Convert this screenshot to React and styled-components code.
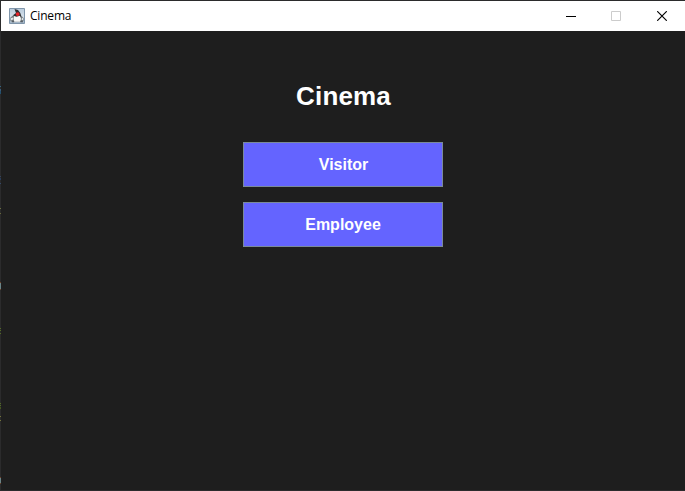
import React from 'react';
import styled, { createGlobalStyle } from 'styled-components';

const GlobalStyle = createGlobalStyle`
  * { box-sizing: border-box; }
  body { margin: 0; background: #1e1e1e; overflow: hidden; }
`;

const Desktop = styled.div`
  display: grid;
  grid-template-columns: 1px 1fr;
  grid-template-rows: 1px 1fr 1px;
  width: 685px;
  height: 491px;
  background: #2b2b2c;
`;

const Edge = styled.div`
  grid-column: 1;
  grid-row: 1 / 4;
  svg { display: block; }
`;

const Window = styled.main`
  grid-column: 2;
  grid-row: 2;
  display: flex;
  flex-direction: column;
  background: #1e1e1e;
`;

const TitleBar = styled.header`
  display: flex;
  align-items: center;
  height: 30px;
  padding-left: 8px;
  background: #fff;
`;

const WindowTitle = styled.span`
  flex: 1;
  margin-left: 5px;
  font: 12px/16px 'Open Sans', 'Noto Sans', sans-serif;
  letter-spacing: -0.2px;
  color: #000;
`;

const ControlButton = styled.button`
  display: flex;
  align-items: center;
  justify-content: center;
  width: ${(p) => p.$width || 45}px;
  height: 30px;
  padding: 0;
  border: 0;
  background: none;
  color: ${(p) => (p.disabled ? '#ccc' : '#000')};
  svg { display: block; }
`;

const Controls = styled.div`
  display: flex;
  width: 137px;
`;

const Content = styled.section`
  display: flex;
  flex-direction: column;
  align-items: center;
  padding-top: 50px;
`;

const Heading = styled.h1`
  margin: 0 0 31px;
  padding-left: 1px;
  font: bold 26px/30px 'Liberation Sans', Arial, sans-serif;
  letter-spacing: 0.15px;
  color: #fff;
`;

const Menu = styled.nav`
  display: flex;
  flex-direction: column;
  gap: 15px;
`;

const MenuButton = styled.button`
  width: 200px;
  height: 45px;
  padding: 0 0 0 ${(p) => p.$inset || 0}px;
  border: 1px solid #7a8a99;
  background: #6464ff;
  color: #fff;
  font: bold 16px/18px 'Liberation Sans', Arial, sans-serif;
`;

const edgeMarks = [
  [86, 1, '#356580'], [89, 2, '#385a78'], [91, 3, '#23506f'],
  [176, 1, '#34445c'], [178, 2, '#293c59'], [183, 1, '#34496a'],
  [208, 1, '#6b7040'], [213, 1, '#68683c'],
  [282, 1, '#70432c'], [283, 6, '#6b8588'], [289, 1, '#70432c'],
  [328, 1, '#536b25'], [330, 1, '#536b25'], [333, 1, '#536b25'],
  [403, 1, '#536b25'], [405, 1, '#536b25'], [407, 2, '#45571f'],
  [416, 1, '#74743b'], [420, 1, '#74743b'],
  [477, 1, '#70432c'], [478, 5, '#6b8588'], [483, 1, '#70432c'],
];

const JavaIcon = () => (
  <svg width="16" height="16" viewBox="0 0 16 16">
    <defs>
      <linearGradient id="tile" x2="0" y2="1">
        <stop stopColor="#b9cbdc" />
        <stop offset=".55" stopColor="#d5e0ea" />
        <stop offset="1" stopColor="#9fb2c3" />
      </linearGradient>
    </defs>
    <path d="M.5.5h15v15H.5z" fill="url(#tile)" stroke="#8096ab" />
    <path d="M5.5 1l3.5 1 2.3 3 1 3v2H4.5L4.3 7 7 5z" fill="#2e2e31" />
    <path d="M1.5 9.5L4 7.5l2 2h5l1.5-1.5 2 2v3l-2 1H3.5l-2-1z" fill="#6d7478" />
    <path d="M5 8l2.5.7L11 7.8l1 3-.8 3H5.3l-.8-3z" fill="#f8f8f7" />
    <path d="M2 10l2-.5v2L2 12.5zm11-.5l1 .7v2l-1.5-.5z" fill="#e2e6e8" />
    <path d="M3 13.3h2v1H3zm8.5 0H14v1h-2.5z" fill="#4f565c" />
    <circle cx="8.7" cy="6.1" r="1.9" fill="#e92329" />
  </svg>
);

export default function App() {
  return (
    <>
      <GlobalStyle />
      <Desktop>
        <Edge>
          <svg width="1" height="491">
            {edgeMarks.map(([y, h, color]) => (
              <rect key={y} y={y} width="1" height={h} fill={color} />
            ))}
          </svg>
        </Edge>
        <Window>
          <TitleBar>
            <JavaIcon />
            <WindowTitle>Cinema</WindowTitle>
            <Controls>
              <ControlButton aria-label="Minimize">
                <svg width="10" height="10"><path d="M0 5h10v1H0z" fill="currentColor" /></svg>
              </ControlButton>
              <ControlButton aria-label="Maximize" disabled>
                <svg width="10" height="10"><path d="M.5.5h9v9h-9z" fill="none" stroke="currentColor" /></svg>
              </ControlButton>
              <ControlButton aria-label="Close" $width={47}>
                <svg width="10" height="10"><path d="M.2.2l9.6 9.6M9.8.2L.2 9.8" stroke="currentColor" strokeWidth="1.15" /></svg>
              </ControlButton>
            </Controls>
          </TitleBar>
          <Content>
            <Heading>Cinema</Heading>
            <Menu>
              <MenuButton $inset={1}>Visitor</MenuButton>
              <MenuButton>Employee</MenuButton>
            </Menu>
          </Content>
        </Window>
      </Desktop>
    </>
  );
}
